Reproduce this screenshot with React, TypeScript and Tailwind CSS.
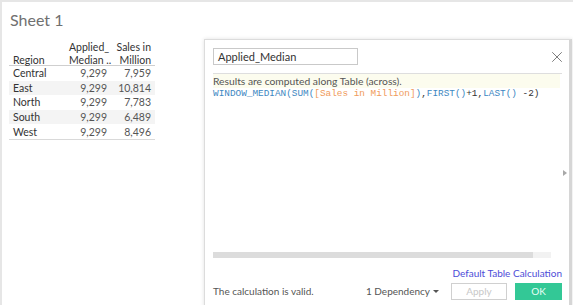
import { X } from 'lucide-react';

const rows = [
  { region: 'Central', median: '9,299', sales: '7,959' },
  { region: 'East', median: '9,299', sales: '10,814' },
  { region: 'North', median: '9,299', sales: '7,783' },
  { region: 'South', median: '9,299', sales: '6,489' },
  { region: 'West', median: '9,299', sales: '8,496' },
];

function SheetTable() {
  return (
    <div className="w-[146px] text-[10.5px] text-[#333]">
      <div className="grid grid-cols-[60px_46px_40px] h-[25px] items-end leading-[12.5px] border-b border-[#cfcfcf] pb-[1px] whitespace-nowrap">
        <div className="pl-[4px]">Region</div>
        <div className="pr-[8px] text-right">
          Applied_
          <br />
          Median ..
        </div>
        <div className="pr-[4px] text-right">
          Sales in
          <br />
          Million
        </div>
      </div>
      {rows.map((r, i) => (
        <div
          key={r.region}
          className={
            'grid grid-cols-[60px_46px_40px] h-[14.6px] items-center leading-[14px] ' +
            (i % 2 === 1 ? 'bg-[#f4f4f4]' : 'bg-white')
          }
        >
          <div className="pl-[4px]">{r.region}</div>
          <div className="pr-[8px] text-right text-[#555]">{r.median}</div>
          <div className="pr-[4px] text-right text-[#555]">{r.sales}</div>
        </div>
      ))}
      <div className="border-t border-[#d9d9d9]" />
    </div>
  );
}

function CalcDialog() {
  return (
    <div className="absolute left-[202px] top-[37px] w-[368px] h-[268px] bg-white border-t border-l border-[#dcdcdc] border-r-[3px] border-r-[#d6d6d6] shadow-[0_0_4px_rgba(0,0,0,0.12)] flex flex-col pl-[8px] pr-[7px] pt-[8px] pb-[7px]">
      <div className="flex items-center justify-between h-[17px]">
        <div className="w-[145px] h-[17px] border border-[#c9c9c9] px-[4px] text-[11px] leading-[15px] text-[#333]">
          Applied_Median
        </div>
        <X className="w-[18px] h-[18px] text-[#7a7a7a] mr-[-4px]" strokeWidth={1.3} />
      </div>

      <div className="mt-[8px] border-t border-[#dedede]" />
      <div className="mr-[2px] h-[14px] bg-[#fcfcee] text-[10.3px] leading-[14px] text-[#555]">
        Results are computed along Table (across).
      </div>
      <div className="h-[12px] text-[9.4px] leading-[12px] font-['Liberation_Mono',monospace] text-[#333] whitespace-pre">
        <span className="text-[#3d87c2]">WINDOW_MEDIAN(SUM(</span>
        <span className="text-[#f09a5a]">[Sales in Million]</span>
        <span className="text-[#3d87c2]">)</span>
        <span>,</span>
        <span className="text-[#3d87c2]">FIRST()</span>
        <span>+1,</span>
        <span className="text-[#3d87c2]">LAST()</span>
        <span> -2)</span>
      </div>

      <div className="flex-1 relative">
        <div className="absolute right-[-5px] top-[70px] w-0 h-0 border-y-[3px] border-y-transparent border-l-[4px] border-l-[#a8a8a8]" />
      </div>

      <div className="h-[6px] w-[338px] bg-[#f2f2f2]">
        <div className="h-full w-[320px] bg-[#dcdcdc]" />
      </div>

      <div className="mt-[9px] h-[12px] flex justify-end">
        <span className="text-[10px] leading-[12px] text-[#4d4dd8]">Default Table Calculation</span>
      </div>

      <div className="mt-[4px] h-[17px] flex items-center text-[10px] text-[#555]">
        <span className="flex-1">The calculation is valid.</span>
        <span className="flex items-center gap-[3px] mr-[12px]">
          1 Dependency
          <span className="w-0 h-0 border-x-[3px] border-x-transparent border-t-[3.5px] border-t-[#555]" />
        </span>
        <div className="w-[56px] h-[17px] border border-[#d0d0d0] flex items-center justify-center text-[#c8c8c8]">
          Apply
        </div>
        <div className="ml-[8px] w-[47px] h-[17px] bg-[#33c896] flex items-center justify-center text-[#e8fff6]">
          OK
        </div>
      </div>
    </div>
  );
}

export default function App() {
  return (
    <div className="relative w-[573px] h-[305px] overflow-hidden bg-white border-l-2 border-t-2 border-[#e6e6e6] font-['Lato','Liberation_Sans',sans-serif]">
      <div className="pl-[8px] pt-[8px]">
        <div className="text-[16px] leading-[20px] text-[#707070]">Sheet 1</div>
        <div className="mt-[11px] ml-[-1px]">
          <SheetTable />
        </div>
      </div>
      <CalcDialog />
    </div>
  );
}
